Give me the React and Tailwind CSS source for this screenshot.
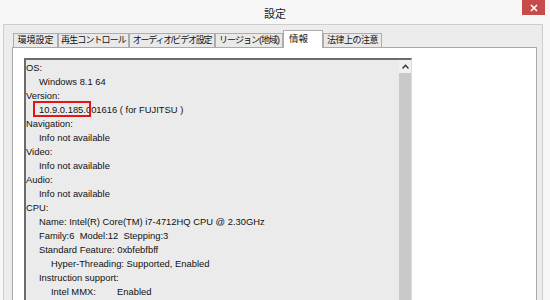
import React from "react";

const lines = [
  { t: "OS:", l: 0 },
  { t: "Windows 8.1 64", l: 1 },
  { t: "Version:", l: 0 },
  { t: "10.9.0.185.001616 ( for FUJITSU )", l: 1, mark: true },
  { t: "Navigation:", l: 0 },
  { t: "Info not available", l: 1 },
  { t: "Video:", l: 0 },
  { t: "Info not available", l: 1 },
  { t: "Audio:", l: 0 },
  { t: "Info not available", l: 1 },
  { t: "CPU:", l: 0 },
  { t: "Name: Intel(R) Core(TM) i7-4712HQ CPU @ 2.30GHz", l: 1 },
  { t: "Family:6  Model:12  Stepping:3", l: 1 },
  { t: "Standard Feature: 0xbfebfbff", l: 1 },
  { t: "Hyper-Threading: Supported, Enabled", l: 2 },
  { t: "Instruction support:", l: 1 },
  { t: "mmx", l: 2 },
];

const tabs = [
  { n: "環境設定", c: "w-[45px] tracking-[0px]" },
  { n: "再生コントロール", c: "w-[71px] tracking-[-0.9px]" },
  { n: "オーディオ/ビデオ設定", c: "w-[86px] tracking-[-1.2px]" },
  { n: "リージョン(地域)", c: "w-[68px] tracking-[-1px]" },
  { n: "情報", c: "w-[40px]", sel: true },
  { n: "法律上の注意", c: "w-[59px] tracking-[-0.5px]" },
];

export default function App() {
  return (
    <div className="w-[550px] h-[300px] overflow-hidden bg-[#f7f7f7] flex flex-col font-['Liberation_Sans','Noto_Sans_CJK_JP',sans-serif] text-[#111]">
      {/* title bar */}
      <div className="h-[24px] shrink-0 flex items-start">
        <div className="w-[264px] shrink-0" />
        <div className="pt-[6px] text-[11px] leading-[14px] text-[#222] font-['Noto_Sans_CJK_JP',sans-serif]">設定</div>
        <div className="flex-1" />
        <div className="w-[23px] h-[15px] mr-[5px] bg-[#c74b4b] flex items-center justify-center">
          <svg width="8" height="8" viewBox="0 0 8 8">
            <path d="M1 1 L7 7 M7 1 L1 7" stroke="#fff" strokeWidth="1.6" />
          </svg>
        </div>
      </div>
      {/* frame */}
      <div className="ml-[3px] w-[540px] flex-1 border-l border-t border-r border-[#cdcdcd] bg-[#ececec] pt-[5px] pl-[8px] pr-[5px] flex flex-col">
        <div className="h-[17px] shrink-0 flex items-end pl-[1px]">
          {tabs.map((t) =>
            t.sel ? (
              <div
                key={t.n}
                className={`${t.c} h-[18px] -mb-px relative z-10 bg-white border border-b-0 border-[#acacac] text-[9.5px] leading-[14px] pl-[5px] pt-[1px] whitespace-nowrap`}
              >
                {t.n}
              </div>
            ) : (
              <div
                key={t.n}
                className={`${t.c} h-[14px] shrink-0 bg-[#e9e9e9] border border-b-0 border-[#acacac] text-[9px] leading-[13px] flex justify-center whitespace-nowrap`}
              >
                {t.n}
              </div>
            )
          )}
        </div>
        <div className="flex-1 bg-white border border-[#a9a9a9] pt-[10px] pl-[11px]">
          <div className="w-[388px] h-[300px] border-t-2 border-l-2 border-[#6b6b6b] border-r border-r-[#dcdcdc] bg-[#ebebeb] flex">
            <div className="flex-1 pt-[1px] text-[9.4px] leading-[14px]">
              {lines.map((ln, i) => (
                <div
                  key={i}
                  className={`h-[14px] whitespace-pre relative ${ln.l === 0 ? "pl-0" : ln.l === 1 ? "pl-[13px]" : "pl-[25px]"}`}
                >
                  {ln.t === "mmx" ? (
                    <>
                      <span className="inline-block w-[66px]">Intel MMX:</span>
                      <span>Enabled</span>
                    </>
                  ) : (
                    ln.t
                  )}
                  {ln.mark && (
                    <div className="absolute left-[7px] top-[-2px] w-[58px] h-[16px] border-2 border-[#e51515]" />
                  )}
                </div>
              ))}
            </div>
            <div className="w-[12px] shrink-0 bg-[#c9c9c9] flex flex-col">
              <div className="h-[13px] bg-[#f0f0f0] flex items-center justify-center">
                <svg width="7" height="5" viewBox="0 0 7 5">
                  <path d="M0.5 4.5 L3.5 1.2 L6.5 4.5" stroke="#333" strokeWidth="1.4" fill="none" />
                </svg>
              </div>
            </div>
          </div>
        </div>
      </div>
    </div>
  );
}
